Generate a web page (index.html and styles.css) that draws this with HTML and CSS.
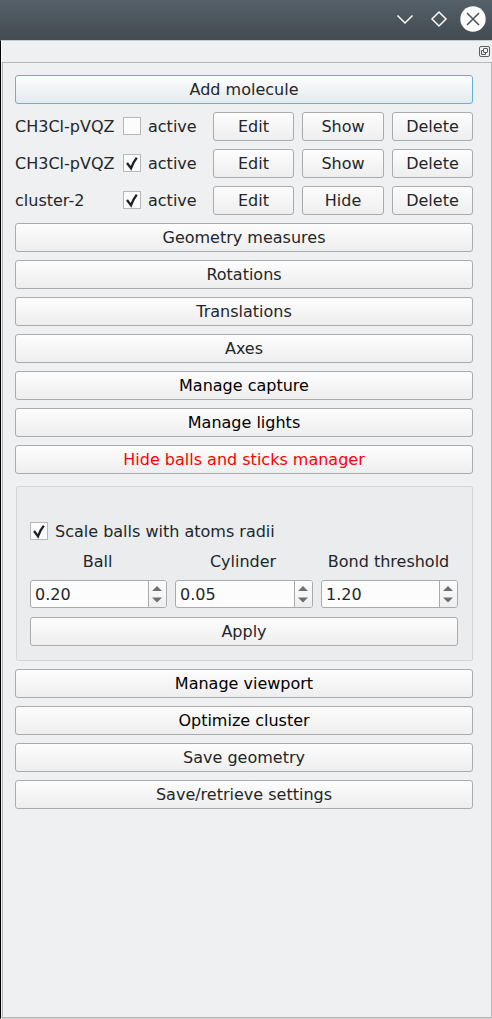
FILE: index.html
```html
<!DOCTYPE html>
<html lang="en">
<head>
<meta charset="utf-8">
<title>Molecule manager</title>
<link rel="stylesheet" href="styles.css">
</head>
<body>
<header class="titlebar">
  <svg class="window-controls" width="100" height="40" viewBox="392 0 100 40">
    <path d="M397.5 15.5L405 23L412.500 15.500M439 12L446 19L439 26L432 19Z" fill="none" stroke="#fcfcfc" stroke-width="1.500"/>
    <circle cx="473" cy="19" r="12.700" fill="#fcfcfc"/>
    <path d="M467 13L479 25M479 13L467 25" stroke="#475057" stroke-width="1.500"/>
  </svg>
</header>
<div class="window">
  <div class="dock-title">
    <svg width="11" height="11" viewBox="0 0 11 11" fill="none" stroke="#5c5c5c">
      <rect x=".5" y=".5" width="10" height="10" rx="1.500"/>
      <rect x="4.500" y="2.500" width="4" height="4" rx=".5"/>
      <path d="M4.500 4.500H2.500V8.500H6.500V6.500"/>
    </svg>
  </div>
  <main class="panel">
    <button class="button focused">Add molecule</button>
    <div class="molecule">
      <span>CH3Cl-pVQZ</span>
      <label class="check"><i class="box"></i>active</label>
      <button class="button">Edit</button><button class="button">Show</button><button class="button">Delete</button>
    </div>
    <div class="molecule">
      <span>CH3Cl-pVQZ</span>
      <label class="check"><i class="box"><svg width="16" height="16" viewBox="0 0 16 16"><path d="M3 8L7 13.300Q8.800 7.500 12.800 2.700" class="tick"/></svg></i>active</label>
      <button class="button">Edit</button><button class="button">Show</button><button class="button">Delete</button>
    </div>
    <div class="molecule">
      <span>cluster-2</span>
      <label class="check"><i class="box"><svg width="16" height="16" viewBox="0 0 16 16"><path d="M3 8L7 13.300Q8.800 7.500 12.800 2.700" class="tick"/></svg></i>active</label>
      <button class="button">Edit</button><button class="button">Hide</button><button class="button">Delete</button>
    </div>
    <button class="button">Geometry measures</button>
    <button class="button">Rotations</button>
    <button class="button">Translations</button>
    <button class="button">Axes</button>
    <button class="button black">Manage capture</button>
    <button class="button black">Manage lights</button>
    <button class="button red">Hide balls and sticks manager</button>
    <section class="group">
      <label class="check"><i class="box"><svg width="16" height="16" viewBox="0 0 16 16"><path d="M3 8L7 13.300Q8.800 7.500 12.800 2.700" class="tick"/></svg></i>Scale balls with atoms radii</label>
      <div class="fields">
        <span>Ball</span><span>Cylinder</span><span>Bond threshold</span>
        <div class="spin"><b>0.20</b><svg width="17" height="26" viewBox="0 0 17 26"><path d="M3 10L8 5L13 10ZM3 16.500L8 21.500L13 16.500Z"/></svg></div>
        <div class="spin"><b>0.05</b><svg width="17" height="26" viewBox="0 0 17 26"><path d="M3 10L8 5L13 10ZM3 16.500L8 21.500L13 16.500Z"/></svg></div>
        <div class="spin"><b>1.20</b><svg width="17" height="26" viewBox="0 0 17 26"><path d="M3 10L8 5L13 10ZM3 16.500L8 21.500L13 16.500Z"/></svg></div>
      </div>
      <button class="button">Apply</button>
    </section>
    <button class="button black">Manage viewport</button>
    <button class="button black">Optimize cluster</button>
    <button class="button">Save geometry</button>
    <button class="button">Save/retrieve settings</button>
  </main>
</div>
</body>
</html>
```
FILE: styles.css
```css
* { box-sizing: border-box; }
body {
  margin: 0;
  height: 1019px;
  display: flex;
  flex-direction: column;
  overflow: hidden;
  background: #eff0f1;
  color: #232629;
  font: 16px/20px "DejaVu Sans", sans-serif;
}
.titlebar {
  height: 40px;
  flex: none;
  display: flex;
  justify-content: flex-end;
  background: linear-gradient(#566069, #475057 75%, #454c54);
}
.window {
  flex: 1;
  display: flex;
  flex-direction: column;
  border-top: 1px solid #c8cacb;
  border-left: 1px solid #000;
  border-bottom: 1px solid #cfcfd0;
}
.dock-title {
  height: 21px;
  flex: none;
  display: flex;
  justify-content: flex-end;
  align-items: center;
  padding-right: 2px;
  border-left: 1px solid #fcfcfc;
}
.panel {
  flex: 1;
  display: flex;
  flex-direction: column;
  gap: 8px;
  padding: 12px 18px 0 12px;
  margin-left: 1px;
  border: 1px solid #b7b8ba;
}
.button {
  height: 29px;
  width: 100%;
  flex: none;
  padding: 1px 0 0;
  border: 1px solid #a9abac;
  border-radius: 3px;
  background: linear-gradient(#fdfdfd, #eeeeef);
  color: inherit;
  font: inherit;
}
.focused { border-color: #5eb3df; background: linear-gradient(#fefefe, #e2e9ed); }
.black { color: #000; }
.red { color: #f00; }
.molecule {
  height: 29px;
  display: grid;
  grid-template-columns: 100px 82px 81px 82px 81px;
  column-gap: 8px;
  align-items: center;
  white-space: nowrap;
}
.check { height: 20px; display: flex; align-items: flex-start; gap: 7px; }
.box {
  width: 18px;
  height: 18px;
  flex: none;
  display: block;
  border: 1px solid #b6b7b8;
  background: #fcfcfc;
}
.box svg { display: block; }
.tick { fill: none; stroke: #1d2022; stroke-width: 2.3; }
.group {
  height: 175px;
  margin: 4px 0 0 1px;
  padding: 35px 14px 0 13px;
  border: 1px solid #d4d5d7;
  border-radius: 2px;
  background: #ebecee;
}
.fields {
  display: grid;
  grid-template-columns: 137px 138px 137px;
  grid-template-rows: 20px 28px;
  column-gap: 8px;
  row-gap: 8px;
  margin: 10px 0 9px;
  text-align: center;
}
.fields span { padding-right: 2px; }
.spin {
  display: flex;
  border: 1px solid #a9abac;
  border-radius: 3px;
  background: #fcfcfc;
  overflow: hidden;
}
.spin b { flex: 1; padding: 4px 0 0 4px; font-weight: 400; text-align: left; }
.spin svg {
  box-sizing: content-box;
  border-left: 1px solid #a9abac;
  background: linear-gradient(#fdfdfd, #eeeeef);
  fill: #6c7072;
}
```
